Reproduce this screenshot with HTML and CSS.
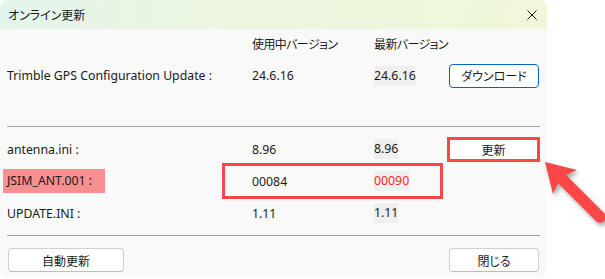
FILE: index.html
```html
<!DOCTYPE html>
<html lang="ja">
<head>
  <meta charset="UTF-8"/>
  <title>オンライン更新</title>
  <link rel="stylesheet" href="styles.css">
</head>
<body>
  <div class="stage">
    <div class="window">
      <div class="titlebar">
        <span class="title jp">オンライン更新</span>
        <svg class="close" width="10" height="10" viewBox="0 0 10 10">
          <path d="M0.5 0.5L9.5 9.5M9.5 0.5L0.5 9.5" stroke="#1a1a1a" stroke-width="1" fill="none"/>
        </svg>
      </div>

      <div class="content">
        <div class="row head">
          <span></span>
          <span class="jp">使用中バージョン</span>
          <span class="jp">最新バージョン</span>
          <span></span>
        </div>
        <div class="row main">
          <span>Trimble GPS Configuration Update :</span>
          <span>24.6.16</span>
          <span><span class="latest">24.6.16</span></span>
          <button class="btn primary jp">ダウンロード</button>
        </div>

        <div class="sep"></div>

        <div class="row file">
          <span>antenna.ini :</span>
          <span>8.96</span>
          <span><span class="latest">8.96</span></span>
          <button class="btn marked jp">更新</button>
        </div>
        <div class="row file">
          <span><span class="hilite">JSIM_ANT.001 :</span></span>
          <span>00084</span>
          <span><span class="latest newer">00090</span></span>
          <span></span>
        </div>
        <div class="row file">
          <span>UPDATE.INI :</span>
          <span>1.11</span>
          <span><span class="latest">1.11</span></span>
          <span></span>
        </div>

        <div class="sep lower"></div>

        <div class="footer">
          <button class="btn wide jp">自動更新</button>
          <button class="btn jp">閉じる</button>
        </div>
      </div>

      <!-- annotation box around the versions -->
      <div class="mark"></div>
    </div>

    <svg class="arrow" width="70" height="75" viewBox="540 155 70 75">
      <polygon fill="#f94646"
        points="545,162 577,170 566,175 604,213 596,221 558,183 553,194"/>
      <circle cx="600" cy="217" r="5.7" fill="#f94646"/>
    </svg>
  </div>
</body>
</html>
```

FILE: styles.css
```css
:root {
  --text: #1a1a1a;
  --bg: #f9f9f9;
  --line: #a0a0a0;
  --red: #f94646;
  --blue: #0067c0;
}

* {
  box-sizing: border-box;
  margin: 0;
  padding: 0;
}

body {
  background: #fff;
  font-family: 'Noto Sans', 'Noto Sans CJK JP', sans-serif;
  font-size: 12.3px;
  color: var(--text);
}

.jp {
  font-family: 'Noto Sans CJK JP', sans-serif;
  font-size: 12px;
  font-feature-settings: "palt";
}

.stage {
  position: relative;
  width: 605px;
  height: 279px;
  overflow: hidden;
}

.window {
  position: relative;
  width: 547px;
  height: 278px;
  background: var(--bg);
  border-radius: 8px;
  overflow: hidden;
}

.titlebar {
  height: 29px;
  display: flex;
  align-items: center;
  justify-content: space-between;
  padding: 0 10px 0 8px;
  background: linear-gradient(100deg, #e4f4ec 0%, #ecf6e0 40%, #f0f7da 100%);
}

.close {
  display: block;
}

.content {
  padding: 0 7px;
}

.row {
  display: grid;
  grid-template-columns: 245px 122px 75px 90px;
  align-items: center;
  white-space: nowrap;
}

.head {
  height: 30px;
  padding-bottom: 1px;
}

.head .jp {
  letter-spacing: -0.6px;
}

.main {
  height: 33px;
}

.file {
  height: 32px;
}

.file:nth-of-type(2) {
  height: 31px;
}

.latest {
  display: inline-block;
  line-height: 20px;
  background: #efefef;
}

.newer {
  color: #ff2424;
}

.hilite {
  display: inline-block;
  line-height: 24px;
  margin-left: -4px;
  padding: 0 13px 0 4px;
  background: #f79090;
}

.sep {
  height: 1px;
  background: var(--line);
  margin: 34px 0 6px;
  width: 533px;
}

.sep.lower {
  margin: 6px 0 12px;
}

.footer {
  display: flex;
  justify-content: space-between;
  padding-left: 1px;
  width: 532px;
}

.btn {
  width: 90px;
  height: 24px;
  background: #fff;
  border: 1px solid #d0d0d0;
  border-bottom-color: #bdbdbd;
  border-radius: 4px;
  color: var(--text);
}

.btn.wide {
  width: 116px;
}

.btn.primary {
  border: 1px solid var(--blue);
}

.btn.marked {
  width: 93px;
  height: 25px;
  margin-left: -2px;
  border: 3px solid var(--red);
  border-radius: 0;
}

.mark {
  position: absolute;
  left: 222px;
  top: 163px;
  width: 221px;
  height: 36px;
  border: 3px solid var(--red);
}

.arrow {
  position: absolute;
  left: 540px;
  top: 155px;
  filter: drop-shadow(2px 3px 2px rgba(0,0,0,0.35));
}
```
